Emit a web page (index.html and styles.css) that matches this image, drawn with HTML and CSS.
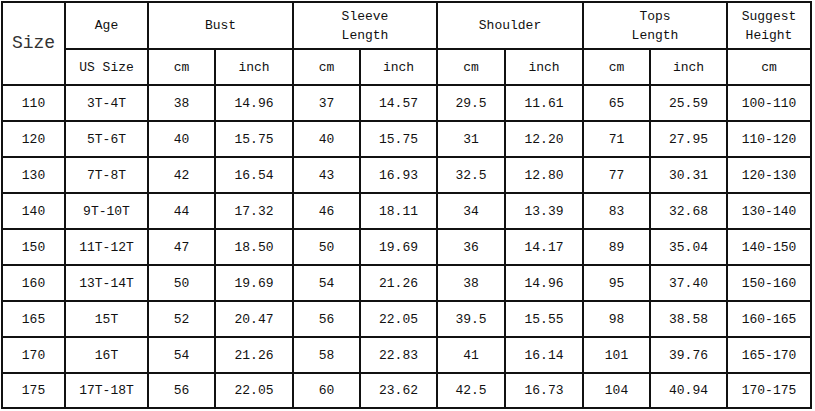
FILE: index.html
```html
<!DOCTYPE html>
<html>
<head>
<meta charset="utf-8">
<link rel="stylesheet" href="styles.css">
</head>
<body>
<table class="size-table">
  <colgroup>
    <col class="c63"><col class="c83"><col class="c67"><col class="c78"><col class="c67"><col class="c77"><col class="c68"><col class="c78"><col class="c67"><col class="c77"><col class="c84">
  </colgroup>
  <tr class="head1">
    <td rowspan="2" class="big">Size</td>
    <td>Age</td>
    <td colspan="2">Bust</td>
    <td colspan="2">Sleeve<br>Length</td>
    <td colspan="2">Shoulder</td>
    <td colspan="2">Tops<br>Length</td>
    <td>Suggest<br>Height</td>
  </tr>
  <tr class="head2">
    <td>US Size</td><td>cm</td><td>inch</td><td>cm</td><td>inch</td><td>cm</td><td>inch</td><td>cm</td><td>inch</td><td>cm</td>
  </tr>
  <tr><td>110</td><td>3T-4T</td><td>38</td><td>14.96</td><td>37</td><td>14.57</td><td>29.5</td><td>11.61</td><td>65</td><td>25.59</td><td>100-110</td></tr>
  <tr><td>120</td><td>5T-6T</td><td>40</td><td>15.75</td><td>40</td><td>15.75</td><td>31</td><td>12.20</td><td>71</td><td>27.95</td><td>110-120</td></tr>
  <tr><td>130</td><td>7T-8T</td><td>42</td><td>16.54</td><td>43</td><td>16.93</td><td>32.5</td><td>12.80</td><td>77</td><td>30.31</td><td>120-130</td></tr>
  <tr><td>140</td><td>9T-10T</td><td>44</td><td>17.32</td><td>46</td><td>18.11</td><td>34</td><td>13.39</td><td>83</td><td>32.68</td><td>130-140</td></tr>
  <tr><td>150</td><td>11T-12T</td><td>47</td><td>18.50</td><td>50</td><td>19.69</td><td>36</td><td>14.17</td><td>89</td><td>35.04</td><td>140-150</td></tr>
  <tr><td>160</td><td>13T-14T</td><td>50</td><td>19.69</td><td>54</td><td>21.26</td><td>38</td><td>14.96</td><td>95</td><td>37.40</td><td>150-160</td></tr>
  <tr><td>165</td><td>15T</td><td>52</td><td>20.47</td><td>56</td><td>22.05</td><td>39.5</td><td>15.55</td><td>98</td><td>38.58</td><td>160-165</td></tr>
  <tr><td>170</td><td>16T</td><td>54</td><td>21.26</td><td>58</td><td>22.83</td><td>41</td><td>16.14</td><td>101</td><td>39.76</td><td>165-170</td></tr>
  <tr class="last"><td>175</td><td>17T-18T</td><td>56</td><td>22.05</td><td>60</td><td>23.62</td><td>42.5</td><td>16.73</td><td>104</td><td>40.94</td><td>170-175</td></tr>
</table>
</body>
</html>
```
FILE: styles.css
```css
html, body {
  margin: 0;
  padding: 0;
  background: #fff;
}
body {
  padding: 1px 0 0 1px;
}
.size-table {
  border-collapse: collapse;
  table-layout: fixed;
  width: 811px;
  font-family: "Liberation Mono", "DejaVu Sans Mono", monospace;
  font-size: 13px;
  color: #111;
}
.c63 { width: 63px; }
.c83 { width: 83px; }
.c67 { width: 67px; }
.c78 { width: 78px; }
.c77 { width: 77px; }
.c68 { width: 68px; }
.c84 { width: 84px; }
.size-table td {
  border: 2px solid #111;
  text-align: center;
  vertical-align: middle;
  padding: 0;
  height: 34px;
  line-height: 19px;
}
.head1 td {
  height: 45px;
}
.last td {
  height: 33px;
}
.size-table td.big {
  font-size: 18px;
  color: #333;
}
```
